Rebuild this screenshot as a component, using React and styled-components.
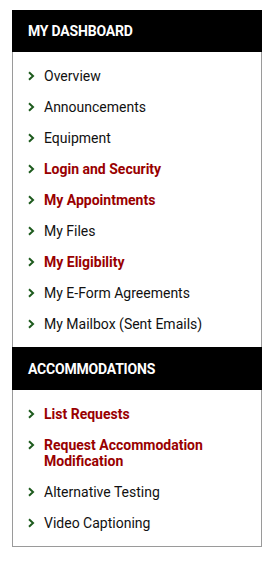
import styled, { createGlobalStyle } from "styled-components";

const Global = createGlobalStyle`
  body {
    margin: 0;
    background: #fff;
    font-family: Roboto, "Liberation Sans", Arial, sans-serif;
  }
`;

const Panel = styled.nav`
  margin: 10px 0 0 12px;
  width: 250px;
  box-sizing: border-box;
  border: 1px solid #9a9a9a;
  border-top: none;
`;

const Header = styled.div`
  background: #000;
  color: #fff;
  height: ${({ tall }) => (tall ? "43px" : "42px")};
  margin: 0 -1px;
  padding-left: 16px;
  display: flex;
  align-items: center;
  font-weight: 700;
  font-size: 14px;
  letter-spacing: -0.2px;
`;

const List = styled.ul`
  list-style: none;
  margin: 0;
  padding: 8px 0;
`;

const Item = styled.li`
  display: flex;
  align-items: flex-start;
  padding: 7.5px 12px 7.5px 15px;
  font-size: 14px;
  line-height: 16px;
  color: ${({ active }) => (active ? "#990000" : "#111")};
  font-weight: ${({ active }) => (active ? 700 : 400)};
`;

const Chevron = styled.svg`
  flex: none;
  width: 7px;
  height: 16px;
  margin-right: 9px;
`;

const Arrow = () => (
  <Chevron viewBox="0 0 7 16">
    <polyline
      points="1,4.3 5,8 1,11.7"
      fill="none"
      stroke="#1d5a1d"
      strokeWidth="2"
    />
  </Chevron>
);

const dashboard = [
  ["Overview"],
  ["Announcements"],
  ["Equipment"],
  ["Login and Security", true],
  ["My Appointments", true],
  ["My Files"],
  ["My Eligibility", true],
  ["My E-Form Agreements"],
  ["My Mailbox (Sent Emails)"],
];

const accommodations = [
  ["List Requests", true],
  ["Request Accommodation Modification", true],
  ["Alternative Testing"],
  ["Video Captioning"],
];

const Section = ({ title, items, tall }) => (
  <>
    <Header tall={tall}>{title}</Header>
    <List>
      {items.map(([label, active]) => (
        <Item key={label} active={active}>
          <Arrow />
          <span>{label}</span>
        </Item>
      ))}
    </List>
  </>
);

export default function App() {
  return (
    <>
      <Global />
      <Panel>
        <Section title="MY DASHBOARD" items={dashboard} />
        <Section title="ACCOMMODATIONS" items={accommodations} tall />
      </Panel>
    </>
  );
}
